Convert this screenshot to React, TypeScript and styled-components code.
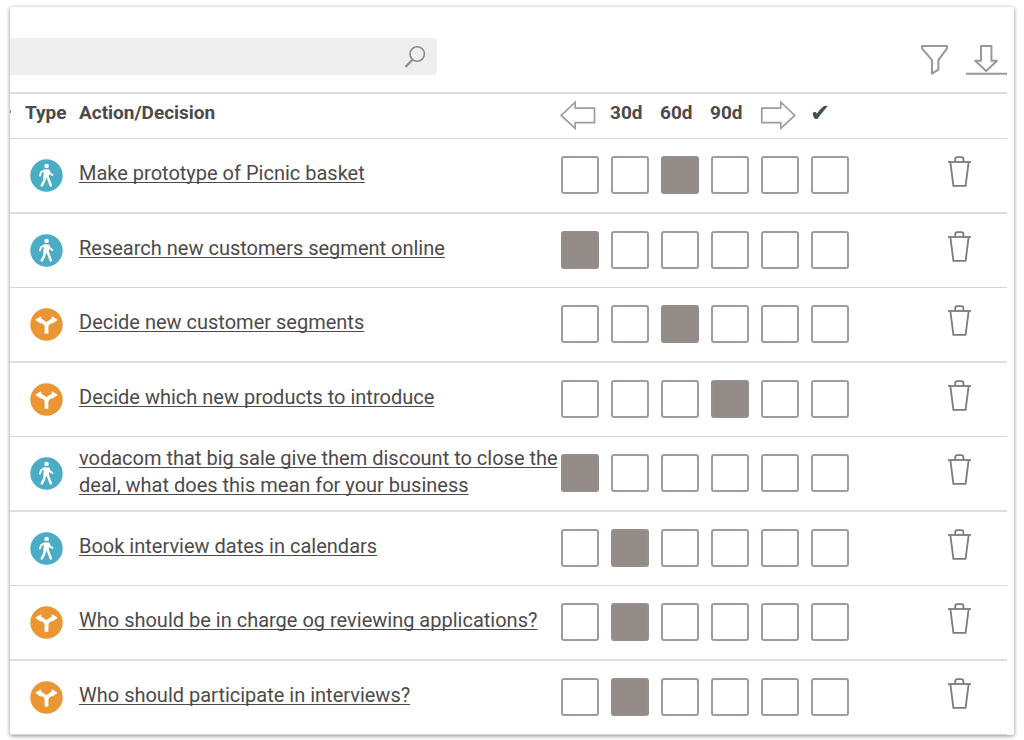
import React, { useState } from "react";
import styled, { createGlobalStyle } from "styled-components";

const GlobalStyle = createGlobalStyle`
  *, *::before, *::after { box-sizing: border-box; }
  body {
    margin: 0;
    background: #fff;
    color: #4d4a4b;
    font-family: Roboto, "Liberation Sans", sans-serif;
  }
`;

const Card = styled.main`
  margin: 7px 10px 5px;
  padding-right: 7px;
  background: #fff;
  border-radius: 2px;
  box-shadow: 0 1px 4px rgba(0, 0, 0, 0.45);
`;

const Toolbar = styled.div`
  display: flex;
  align-items: flex-end;
  justify-content: space-between;
  padding: 31px 0 17px;
`;

const SearchBox = styled.label`
  display: flex;
  align-items: center;
  flex: 0 1 427px;
  height: 37px;
  padding-right: 11px;
  background: #eee;
  border-radius: 0 4px 4px 0;
`;

const SearchInput = styled.input`
  flex: 1;
  min-width: 0;
  height: 100%;
  padding: 0 16px;
  border: 0;
  outline: 0;
  background: transparent;
  color: inherit;
  font: inherit;
  font-size: 18px;
`;

const ToolbarActions = styled.div`
  display: flex;
  gap: 17px;
`;

const IconButton = styled.button`
  display: inline-flex;
  padding: 0;
  border: 0;
  background: none;
  cursor: pointer;
`;

const Icon = styled.svg`
  display: block;
  fill: none;
`;

const Table = styled.table`
  width: 100%;
  table-layout: fixed;
  border-collapse: separate;
  border-spacing: 0;
`;

const Col = styled.col<{ $width?: number }>`
  width: ${(p) => (p.$width ? `${p.$width}px` : "auto")};
`;

const HeadCell = styled.th`
  height: 47px;
  padding: 0 0 6px;
  border-top: 2px solid #dedede;
  border-bottom: 1px solid #d6d6d6;
  font-size: 19px;
  line-height: 24px;
  font-weight: 700;
  text-align: left;
  white-space: nowrap;
`;

const TypeHead = styled(HeadCell)`
  padding-left: 15px;
  background: linear-gradient(#7e8ba0, #7e8ba0) 0 16px / 1px 3px no-repeat;
`;

const ArrowHead = styled(HeadCell)`
  padding: 0 0 2px;
`;

const CheckHead = styled(HeadCell)`
  font-family: "DejaVu Sans", sans-serif;
  font-size: 24px;
`;

const Row = styled.tr`
  & > td {
    height: 74px;
    padding: 0;
    border-bottom: 1px solid #d6d6d6;
  }
  &:nth-child(odd) > td {
    height: 75px;
    border-bottom: 2px solid #dedede;
  }
`;

const TypeCell = styled.td`
  & > svg {
    margin-left: 20px;
  }
`;

const TitleLink = styled.a`
  display: block;
  margin-bottom: 4px;
  color: inherit;
  font-size: 20px;
  line-height: 27px;
  text-decoration: underline;
  text-decoration-thickness: 1px;
  text-underline-offset: 2px;
  text-decoration-skip-ink: none;
`;

const Tick = styled.input`
  display: block;
  appearance: none;
  width: 38px;
  height: 38px;
  margin: 0 0 2px 1px;
  border: 2px solid #a19b99;
  border-radius: 3px;
  background: #fff;
  cursor: pointer;

  &:checked {
    border-color: #958e8b;
    background: #938c89;
  }
`;

const DeleteCell = styled.td`
  & > button {
    margin: 0 0 8px 88px;
  }
`;

const SearchIcon = () => (
  <Icon width="22" height="24" viewBox="0 0 22 24" stroke="#8c8c8c" strokeWidth="1.6" aria-hidden="true">
    <circle cx="13.2" cy="9" r="7.2" />
    <path d="M8.6 14.6 1.5 22" strokeWidth="2.2" />
  </Icon>
);

const FilterIcon = () => (
  <Icon width="28" height="30" viewBox="0 0 28 30" stroke="#999" strokeWidth="2" strokeLinejoin="round" aria-hidden="true">
    <path d="M1 1H26V3.4L17.4 15.2V24.6L11 28.6V15.2L1 3.4Z" />
  </Icon>
);

const DownloadIcon = () => (
  <Icon width="41" height="30" viewBox="0 0 41 30" stroke="#999" strokeWidth="2" strokeLinejoin="round" aria-hidden="true">
    <path d="M15 1H25.4V15.8H31L20.2 26 9.2 15.8H15Z" />
    <path d="M0 28.8H41" />
  </Icon>
);

const ArrowIcon = ({ flip }: { flip?: boolean }) => (
  <Icon width="36" height="30" viewBox="0 0 36 30" stroke="#98a09f" strokeWidth="1.7" aria-hidden="true">
    <path
      d={flip ? "M1.8 8.2H20.8V2.2L34.8 15.5 20.8 28.4V22.6H1.8Z" : "M34.5 8.2H15.2V2.2L1.2 15.5 15.2 28.4V22.6H34.5Z"}
    />
  </Icon>
);

const TrashIcon = () => (
  <Icon width="24" height="32" viewBox="0 0 24 32" stroke="#7c7c7c" strokeWidth="1.8" aria-hidden="true">
    <path d="M0 6H23" />
    <path d="M7.2 6V3.6Q7.2 1.2 9.2 1.2H13.4Q15.4 1.2 15.4 3.6V6" />
    <path d="M2.4 6.4 5.4 29.8H17.6L20.6 6.4" />
  </Icon>
);

const ActionIcon = () => (
  <Icon width="33" height="33" viewBox="0 0 33 33" role="img" aria-label="Action">
    <circle cx="16.5" cy="16.5" r="16.2" fill="#4bacc6" />
    <circle cx="16.6" cy="7" r="2.3" fill="#fff" />
    <g stroke="#fff" strokeLinecap="round" strokeLinejoin="round">
      <path d="M15 11.6 14.6 18H17.8L18 11.6Z" fill="#fff" strokeWidth="2.4" />
      <path d="M14.4 11.2 11 13.2 10 16.6M18.6 11.4 20 14.4 22.4 16" strokeWidth="1.9" />
      <path d="M14.8 18.4 14.2 22 11.8 26.4M17.8 18.4 19.2 22 20.8 26.4" strokeWidth="2.5" />
    </g>
  </Icon>
);

const DecisionIcon = () => (
  <Icon width="33" height="33" viewBox="0 0 33 33" role="img" aria-label="Decision">
    <circle cx="16.5" cy="16.5" r="16.2" fill="#eb9634" />
    <path d="M16.5 25.8V18.6Q16.3 15.8 13.4 14.2L9.4 12M16.5 18.6Q16.7 15.8 19.6 14.2L23.6 12" stroke="#fff" strokeWidth="3.8" />
    <path d="M5.8 11.8 11 8.8 10.6 15.2ZM27.2 11.8 22 8.8 22.4 15.2Z" fill="#fff" stroke="#fff" strokeWidth="0.8" strokeLinejoin="round" />
  </Icon>
);

type Kind = "action" | "decision";

const periods = ["Earlier", "30d", "60d", "90d", "Later", "Done"];

const initialItems: { kind: Kind; title: string; period: number }[] = [
  { kind: "action", title: "Make prototype of Picnic basket", period: 2 },
  { kind: "action", title: "Research new customers segment online", period: 0 },
  { kind: "decision", title: "Decide new customer segments", period: 2 },
  { kind: "decision", title: "Decide which new products to introduce", period: 3 },
  { kind: "action", title: "vodacom that big sale give them discount to close the deal, what does this mean for your business", period: 0 },
  { kind: "action", title: "Book interview dates in calendars", period: 1 },
  { kind: "decision", title: "Who should be in charge og reviewing applications?", period: 1 },
  { kind: "decision", title: "Who should participate in interviews?", period: 1 },
];

export default function App() {
  const [items, setItems] = useState(initialItems);

  const setPeriod = (title: string, period: number) =>
    setItems((list) => list.map((it) => (it.title === title ? { ...it, period } : it)));
  const remove = (title: string) => setItems((list) => list.filter((it) => it.title !== title));

  return (
    <>
      <GlobalStyle />
      <Card>
        <Toolbar>
          <SearchBox>
            <SearchInput type="text" aria-label="Search" />
            <SearchIcon />
          </SearchBox>
          <ToolbarActions>
            <IconButton type="button" aria-label="Filter"><FilterIcon /></IconButton>
            <IconButton type="button" aria-label="Download"><DownloadIcon /></IconButton>
          </ToolbarActions>
        </Toolbar>
        <Table>
          <colgroup>
            <Col $width={69} />
            <Col />
            {periods.map((p) => <Col key={p} $width={50} />)}
            <Col $width={147} />
          </colgroup>
          <thead>
            <tr>
              <TypeHead scope="col">Type</TypeHead>
              <HeadCell scope="col">Action/Decision</HeadCell>
              <ArrowHead scope="col" aria-label="Earlier"><ArrowIcon /></ArrowHead>
              <HeadCell scope="col">30d</HeadCell>
              <HeadCell scope="col">60d</HeadCell>
              <HeadCell scope="col">90d</HeadCell>
              <ArrowHead scope="col" aria-label="Later"><ArrowIcon flip /></ArrowHead>
              <CheckHead scope="col" aria-label="Done">✔</CheckHead>
              <HeadCell scope="col" aria-label="Delete" />
            </tr>
          </thead>
          <tbody>
            {items.map((item) => (
              <Row key={item.title}>
                <TypeCell>{item.kind === "action" ? <ActionIcon /> : <DecisionIcon />}</TypeCell>
                <td><TitleLink href="#">{item.title}</TitleLink></td>
                {periods.map((p, i) => (
                  <td key={p}>
                    <Tick
                      type="checkbox"
                      aria-label={`${item.title}: ${p}`}
                      checked={item.period === i}
                      onChange={() => setPeriod(item.title, i)}
                    />
                  </td>
                ))}
                <DeleteCell>
                  <IconButton type="button" aria-label={`Delete ${item.title}`} onClick={() => remove(item.title)}>
                    <TrashIcon />
                  </IconButton>
                </DeleteCell>
              </Row>
            ))}
          </tbody>
        </Table>
      </Card>
    </>
  );
}
